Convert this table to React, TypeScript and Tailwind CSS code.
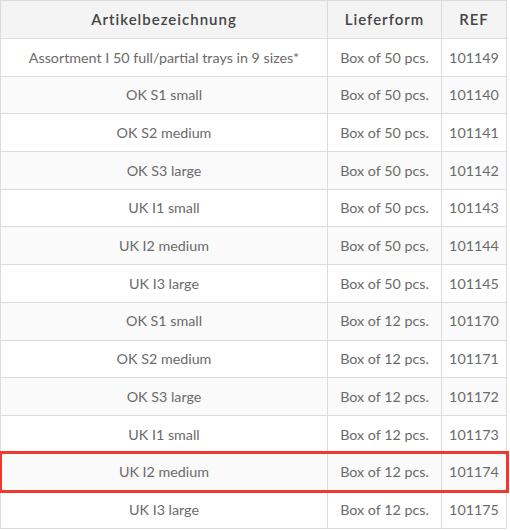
const rows = [
  ["Assortment I 50 full/partial trays in 9 sizes*", "Box of 50 pcs.", "101149"],
  ["OK S1 small", "Box of 50 pcs.", "101140"],
  ["OK S2 medium", "Box of 50 pcs.", "101141"],
  ["OK S3 large", "Box of 50 pcs.", "101142"],
  ["UK I1 small", "Box of 50 pcs.", "101143"],
  ["UK I2 medium", "Box of 50 pcs.", "101144"],
  ["UK I3 large", "Box of 50 pcs.", "101145"],
  ["OK S1 small", "Box of 12 pcs.", "101170"],
  ["OK S2 medium", "Box of 12 pcs.", "101171"],
  ["OK S3 large", "Box of 12 pcs.", "101172"],
  ["UK I1 small", "Box of 12 pcs.", "101173"],
  ["UK I2 medium", "Box of 12 pcs.", "101174"],
  ["UK I3 large", "Box of 12 pcs.", "101175"],
];

export default function App() {
  return (
    <div className="w-[510px] h-[531px] overflow-hidden bg-white font-['Lato',sans-serif]">
      <table className="w-[506px] border-collapse table-fixed text-[14.3px] text-[#6a6a6a]">
        <colgroup>
          <col className="w-[327px]" />
          <col className="w-[114px]" />
          <col className="w-[65px]" />
        </colgroup>
        <thead>
          <tr className="h-[38px] bg-[#f4f4f4] text-[#444] text-[15px]">
            <th className="border border-[#dcdcdc] font-semibold tracking-[1px]">Artikelbezeichnung</th>
            <th className="border border-[#dcdcdc] font-semibold tracking-[1px]">Lieferform</th>
            <th className="border border-[#dcdcdc] font-semibold tracking-[1px]">REF</th>
          </tr>
        </thead>
        <tbody>
          {rows.map((r, i) => (
            <tr
              key={i}
              className={`h-[37.7px] ${i % 2 === 1 ? "bg-[#fafafa]" : "bg-white"} ${
                i === 11 ? "outline-[3px] outline-solid outline-[#ee3a2e] -outline-offset-1" : ""
              }`}
            >
              <td className="border border-[#dcdcdc] text-center">{r[0]}</td>
              <td className="border border-[#dcdcdc] text-center">{r[1]}</td>
              <td className="border border-[#dcdcdc] text-center">{r[2]}</td>
            </tr>
          ))}
        </tbody>
      </table>
    </div>
  );
}
